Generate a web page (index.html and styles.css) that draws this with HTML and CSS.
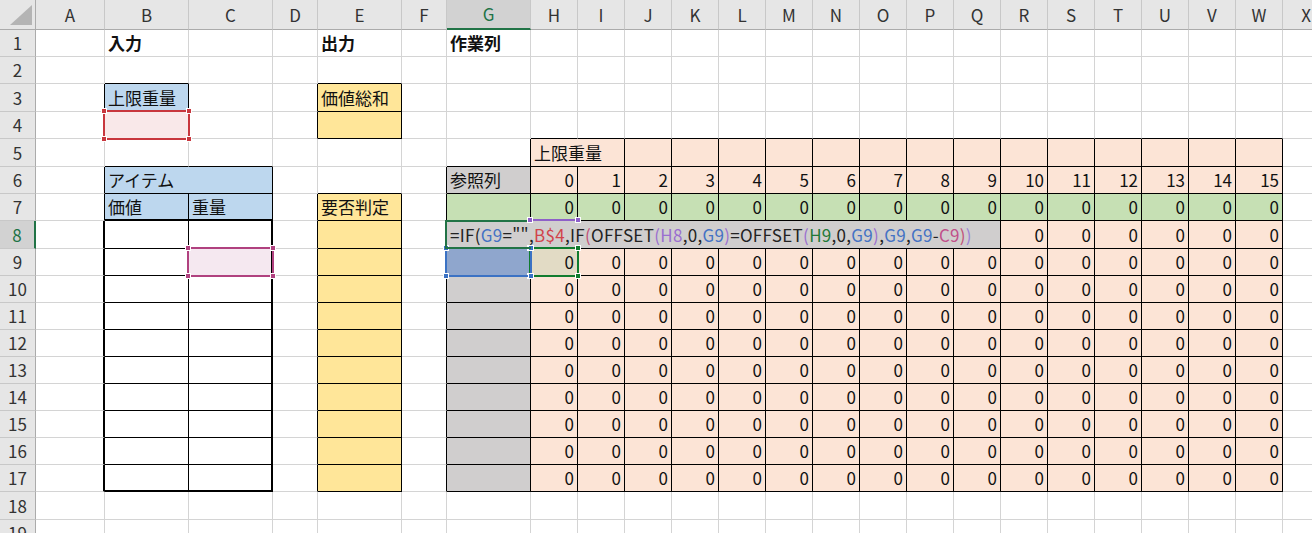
FILE: index.html
```html
<!DOCTYPE html>
<html lang="ja">
<head>
<meta charset="utf-8">
<title>Sheet</title>
<link rel="stylesheet" href="styles.css">
</head>
<body>
<div class="sheet">
<!-- header -->
<div class="corner"><svg width="35" height="29" viewBox="0 0 35 29"><polygon points="10,25 32,25 32,5" fill="#b4b4b4"/></svg></div>
<div class="ch">A</div><div class="ch">B</div><div class="ch">C</div><div class="ch">D</div><div class="ch">E</div><div class="ch">F</div><div class="ch sel">G</div><div class="ch">H</div><div class="ch">I</div><div class="ch">J</div><div class="ch">K</div><div class="ch">L</div><div class="ch">M</div><div class="ch">N</div><div class="ch">O</div><div class="ch">P</div><div class="ch">Q</div><div class="ch">R</div><div class="ch">S</div><div class="ch">T</div><div class="ch">U</div><div class="ch">V</div><div class="ch">W</div><div class="ch">X</div>
<!-- row 1 -->
<div class="rh">1</div><div></div><div class="bd">入力</div><div></div><div></div><div class="bd">出力</div><div></div><div class="bd">作業列</div>
<div></div><div></div><div></div><div></div><div></div><div></div><div></div><div></div><div></div><div></div><div></div><div></div><div></div><div></div><div></div><div></div><div></div>
<!-- row 2 -->
<div class="rh">2</div><div></div><div class="b1"></div><div></div><div></div><div class="b1"></div><div></div><div></div>
<div></div><div></div><div></div><div></div><div></div><div></div><div></div><div></div><div></div><div></div><div></div><div></div><div></div><div></div><div></div><div></div><div></div>
<!-- row 3 -->
<div class="rh">3</div><div class="r1"></div><div class="bc">上限重量</div><div></div><div class="r1"></div><div class="yc">価値総和</div><div></div><div></div>
<div></div><div></div><div></div><div></div><div></div><div></div><div></div><div></div><div></div><div></div><div></div><div></div><div></div><div></div><div></div><div></div><div></div>
<!-- row 4 -->
<div class="rh">4</div><div class="r1"></div><div class="r1 b1 tpk"><span class="ref red"><i class="h tl"></i><i class="h tr"></i><i class="h bl"></i><i class="h br"></i></span></div><div></div><div class="r1"></div><div class="yc"></div><div></div><div></div>
<div class="b1"></div><div class="b1"></div><div class="b1"></div><div class="b1"></div><div class="b1"></div><div class="b1"></div><div class="b1"></div><div class="b1"></div><div class="b1"></div><div class="b1"></div><div class="b1"></div><div class="b1"></div><div class="b1"></div><div class="b1"></div><div class="b1"></div><div class="b1"></div><div></div>
<!-- row 5 -->
<div class="rh">5</div><div></div><div class="b1"></div><div class="b1"></div><div></div><div></div><div></div><div class="r1 b1"></div>
<div class="pc m2">上限重量</div><div class="pc"></div><div class="pc"></div><div class="pc"></div><div class="pc"></div><div class="pc"></div><div class="pc"></div><div class="pc"></div><div class="pc"></div><div class="pc"></div><div class="pc"></div><div class="pc"></div><div class="pc"></div><div class="pc"></div><div class="pc"></div><div></div>
<!-- row 6 -->
<div class="rh">6</div><div class="r1"></div><div class="bc m2">アイテム</div><div></div><div class="b1"></div><div class="r1"></div><div class="gc">参照列</div>
<div class="z">0</div><div class="z">1</div><div class="z">2</div><div class="z">3</div><div class="z">4</div><div class="z">5</div><div class="z">6</div><div class="z">7</div><div class="z">8</div><div class="z">9</div><div class="z">10</div><div class="z">11</div><div class="z">12</div><div class="z">13</div><div class="z">14</div><div class="z">15</div><div></div>
<!-- row 7 -->
<div class="rh">7</div><div class="r1"></div><div class="bc b2">価値</div><div class="bc b2">重量</div><div class="r1"></div><div class="yc">要否判定</div><div class="r1"></div><div class="gn"></div>
<div class="gn n">0</div><div class="gn n">0</div><div class="gn n">0</div><div class="gn n">0</div><div class="gn n">0</div><div class="gn n">0</div><div class="gn n">0</div><div class="gn n">0</div><div class="gn n">0</div><div class="gn n">0</div><div class="gn n">0</div><div class="gn n">0</div><div class="gn n">0</div><div class="gn n">0</div><div class="gn n">0</div><div class="gn n">0</div><div></div>
<!-- row 8 -->
<div class="rh sel">8</div><div class="r2"></div><div class="r1 b1"></div><div class="r2 b1"></div><div class="r1"></div><div class="yc"></div><div class="r1"></div>
<div class="ed m11"><span class="act"></span><span class="pur"><i class="h tl"></i><i class="h tr"></i></span>=IF(<span class="fb">G9</span>="",<span class="fr">B$4</span>,IF<span class="fk">(</span>OFFSET<span class="fv">(H8</span>,0,<span class="fb">G9</span><span class="fv">)</span>=OFFSET<span class="fv">(</span><span class="fg">H9</span>,0,<span class="fb">G9</span><span class="fv">)</span>,<span class="fb">G9</span>,<span class="fb">G9</span>-<span class="fm">C9</span><span class="fk">)</span><span class="fl">)</span></div>
<div class="z">0</div><div class="z">0</div><div class="z">0</div><div class="z">0</div><div class="z">0</div><div class="z">0</div><div></div>
<!-- row 9 -->
<div class="rh">9</div><div class="r2"></div><div class="r1 b1"></div><div class="r2 b1 tmg"><span class="ref mag cref"><i class="h tl"></i><i class="h tr"></i><i class="h bl"></i><i class="h br"></i></span></div><div class="r1"></div><div class="yc"></div><div class="r1"></div>
<div class="gc tbl"><span class="ref blu"><i class="h tl"></i><i class="h tr"></i><i class="h bl"></i><i class="h br"></i></span></div>
<div class="z tgn">0<span class="ref grn"><i class="h tl"></i><i class="h tr"></i><i class="h bl"></i><i class="h br"></i></span></div><div class="z">0</div><div class="z">0</div><div class="z">0</div><div class="z">0</div><div class="z">0</div><div class="z">0</div><div class="z">0</div><div class="z">0</div><div class="z">0</div><div class="z">0</div><div class="z">0</div><div class="z">0</div><div class="z">0</div><div class="z">0</div><div class="z">0</div><div></div>
<!-- row 10 -->
<div class="rh">10</div><div class="r2"></div><div class="r1 b1"></div><div class="r2 b1"></div><div class="r1"></div><div class="yc"></div><div class="r1"></div><div class="gc"></div>
<div class="z">0</div><div class="z">0</div><div class="z">0</div><div class="z">0</div><div class="z">0</div><div class="z">0</div><div class="z">0</div><div class="z">0</div><div class="z">0</div><div class="z">0</div><div class="z">0</div><div class="z">0</div><div class="z">0</div><div class="z">0</div><div class="z">0</div><div class="z">0</div><div></div>
<!-- row 11 -->
<div class="rh">11</div><div class="r2"></div><div class="r1 b1"></div><div class="r2 b1"></div><div class="r1"></div><div class="yc"></div><div class="r1"></div><div class="gc"></div>
<div class="z">0</div><div class="z">0</div><div class="z">0</div><div class="z">0</div><div class="z">0</div><div class="z">0</div><div class="z">0</div><div class="z">0</div><div class="z">0</div><div class="z">0</div><div class="z">0</div><div class="z">0</div><div class="z">0</div><div class="z">0</div><div class="z">0</div><div class="z">0</div><div></div>
<!-- row 12 -->
<div class="rh">12</div><div class="r2"></div><div class="r1 b1"></div><div class="r2 b1"></div><div class="r1"></div><div class="yc"></div><div class="r1"></div><div class="gc"></div>
<div class="z">0</div><div class="z">0</div><div class="z">0</div><div class="z">0</div><div class="z">0</div><div class="z">0</div><div class="z">0</div><div class="z">0</div><div class="z">0</div><div class="z">0</div><div class="z">0</div><div class="z">0</div><div class="z">0</div><div class="z">0</div><div class="z">0</div><div class="z">0</div><div></div>
<!-- row 13 -->
<div class="rh">13</div><div class="r2"></div><div class="r1 b1"></div><div class="r2 b1"></div><div class="r1"></div><div class="yc"></div><div class="r1"></div><div class="gc"></div>
<div class="z">0</div><div class="z">0</div><div class="z">0</div><div class="z">0</div><div class="z">0</div><div class="z">0</div><div class="z">0</div><div class="z">0</div><div class="z">0</div><div class="z">0</div><div class="z">0</div><div class="z">0</div><div class="z">0</div><div class="z">0</div><div class="z">0</div><div class="z">0</div><div></div>
<!-- row 14 -->
<div class="rh">14</div><div class="r2"></div><div class="r1 b1"></div><div class="r2 b1"></div><div class="r1"></div><div class="yc"></div><div class="r1"></div><div class="gc"></div>
<div class="z">0</div><div class="z">0</div><div class="z">0</div><div class="z">0</div><div class="z">0</div><div class="z">0</div><div class="z">0</div><div class="z">0</div><div class="z">0</div><div class="z">0</div><div class="z">0</div><div class="z">0</div><div class="z">0</div><div class="z">0</div><div class="z">0</div><div class="z">0</div><div></div>
<!-- row 15 -->
<div class="rh">15</div><div class="r2"></div><div class="r1 b1"></div><div class="r2 b1"></div><div class="r1"></div><div class="yc"></div><div class="r1"></div><div class="gc"></div>
<div class="z">0</div><div class="z">0</div><div class="z">0</div><div class="z">0</div><div class="z">0</div><div class="z">0</div><div class="z">0</div><div class="z">0</div><div class="z">0</div><div class="z">0</div><div class="z">0</div><div class="z">0</div><div class="z">0</div><div class="z">0</div><div class="z">0</div><div class="z">0</div><div></div>
<!-- row 16 -->
<div class="rh">16</div><div class="r2"></div><div class="r1 b1"></div><div class="r2 b1"></div><div class="r1"></div><div class="yc"></div><div class="r1"></div><div class="gc"></div>
<div class="z">0</div><div class="z">0</div><div class="z">0</div><div class="z">0</div><div class="z">0</div><div class="z">0</div><div class="z">0</div><div class="z">0</div><div class="z">0</div><div class="z">0</div><div class="z">0</div><div class="z">0</div><div class="z">0</div><div class="z">0</div><div class="z">0</div><div class="z">0</div><div></div>
<!-- row 17 -->
<div class="rh">17</div><div class="r2"></div><div class="r1 b2"></div><div class="r2 b2"></div><div class="r1"></div><div class="yc"></div><div class="r1"></div><div class="gc"></div>
<div class="z">0</div><div class="z">0</div><div class="z">0</div><div class="z">0</div><div class="z">0</div><div class="z">0</div><div class="z">0</div><div class="z">0</div><div class="z">0</div><div class="z">0</div><div class="z">0</div><div class="z">0</div><div class="z">0</div><div class="z">0</div><div class="z">0</div><div class="z">0</div><div></div>
<!-- row 18 -->
<div class="rh">18</div><div></div><div></div><div></div><div></div><div></div><div></div><div></div>
<div></div><div></div><div></div><div></div><div></div><div></div><div></div><div></div><div></div><div></div><div></div><div></div><div></div><div></div><div></div><div></div><div></div>
<!-- row 19 -->
<div class="rh">19</div><div></div><div></div><div></div><div></div><div></div><div></div><div></div>
<div></div><div></div><div></div><div></div><div></div><div></div><div></div><div></div><div></div><div></div><div></div><div></div><div></div><div></div><div></div><div></div><div></div>
</div>
</body>
</html>
```

FILE: styles.css
```css
* { box-sizing: border-box; margin: 0; padding: 0; }
html, body { overflow: hidden; background: #fff; }
body {
  font-family: "Noto Sans CJK JP", "Noto Sans", sans-serif;
  font-size: 17px;
  color: #111;
}
.sheet {
  display: grid;
  grid-template-columns: 36px 69px 84px 84px 45px 84px 45px 84px repeat(17, 47px);
  grid-template-rows: 30px 27px 27px 28px 27px 28px 27px 27px 28px 27px repeat(8, 27px) 28px 27px;
  width: max-content;
}
:where(.sheet > div) {
  position: relative;
  display: flex;
  align-items: center;
  padding: 0 3px;
  border-right: 1px solid #d4d4d4;
  border-bottom: 1px solid #d4d4d4;
  white-space: nowrap;
  line-height: 20px;
  min-width: 0;
}
.corner, .ch, .rh { background: #e6e6e6; color: #333; justify-content: center; }
.corner { padding: 0; align-items: flex-start; border-right-color: #ababab; border-bottom-color: #ababab; }
.corner svg { display: block; }
.ch { border-right-color: #c8c8c8; border-bottom-color: #ababab; }
.rh { border-right-color: #ababab; border-bottom-color: #c8c8c8; padding: 0; }
.ch.sel { background: #d2d2d2; color: #217346; border-bottom: 2px solid #217346; }
.rh.sel { background: #d2d2d2; color: #217346; border-right: 2px solid #217346; }

.bd { font-weight: 700; }
.m2 { grid-column: span 2; }
.m11 { grid-column: span 11; }
.n { justify-content: flex-end; }

.r1 { border-right-color: #000; }
.b1 { border-bottom-color: #000; }
.r2 { border-right: 2px solid #000; }
.b2 { border-bottom: 2px solid #000; }

.bc, .yc, .pc, .gc, .gn, .z, .ed { border-right-color: #000; border-bottom-color: #000; }
.bc { background: #bdd7ee; }
.yc { background: #ffe699; }
.pc { background: #fce4d6; }
.z { background: #fce4d6; justify-content: flex-end; }
.gc { background: #d0cece; }
.gn { background: #c6e0b4; }
.bc.b2 { border-bottom: 2px solid #000; }

.ed { background: #d0cece; padding-left: 3px; color: #222; letter-spacing: 0.3px; }
.fb { color: #4472c4; }
.fr { color: #d2434b; }
.fk { color: #c25078; }
.fv { color: #9a6fd0; }
.fg { color: #1f7a38; }
.fm { color: #c0508a; }
.fl { color: #9b82d6; }

.tpk { background: #f9e8e9; }
.tmg { background: #f5e8f0; }
.tbl { background: #8fa6cd; }
.tgn { background: #e2dbc5; }

.ref {
  position: absolute;
  left: -2px; top: -2px; right: -2px; bottom: -2px;
  border: 2px solid currentColor;
  z-index: 2;
}
.ref.cref { right: -3px; }
.red { color: #c8363d; }
.mag { color: #b0417f; }
.blu { color: #3b72c4; z-index: 3; }
.grn { color: #107c2e; }
.h {
  position: absolute;
  width: 6px; height: 6px;
  background: currentColor;
  border: 1px solid #fff;
}
.tl { left: -4px; top: -4px; }
.tr { right: -4px; top: -4px; }
.bl { left: -4px; bottom: -4px; }
.br { right: -4px; bottom: -4px; }

.act {
  position: absolute;
  left: -2px; top: -1px;
  width: 86px; height: 29px;
  border: 2px solid #217346;
  border-right: 0;
  z-index: 4;
}
.pur {
  position: absolute;
  left: 82px; top: -2px;
  width: 50px; height: 2px;
  background: #8e60c8;
  color: #8e60c8;
  z-index: 4;
}
.pur .tl { left: -2px; top: -2px; }
.pur .tr { right: -2px; top: -2px; }
```
